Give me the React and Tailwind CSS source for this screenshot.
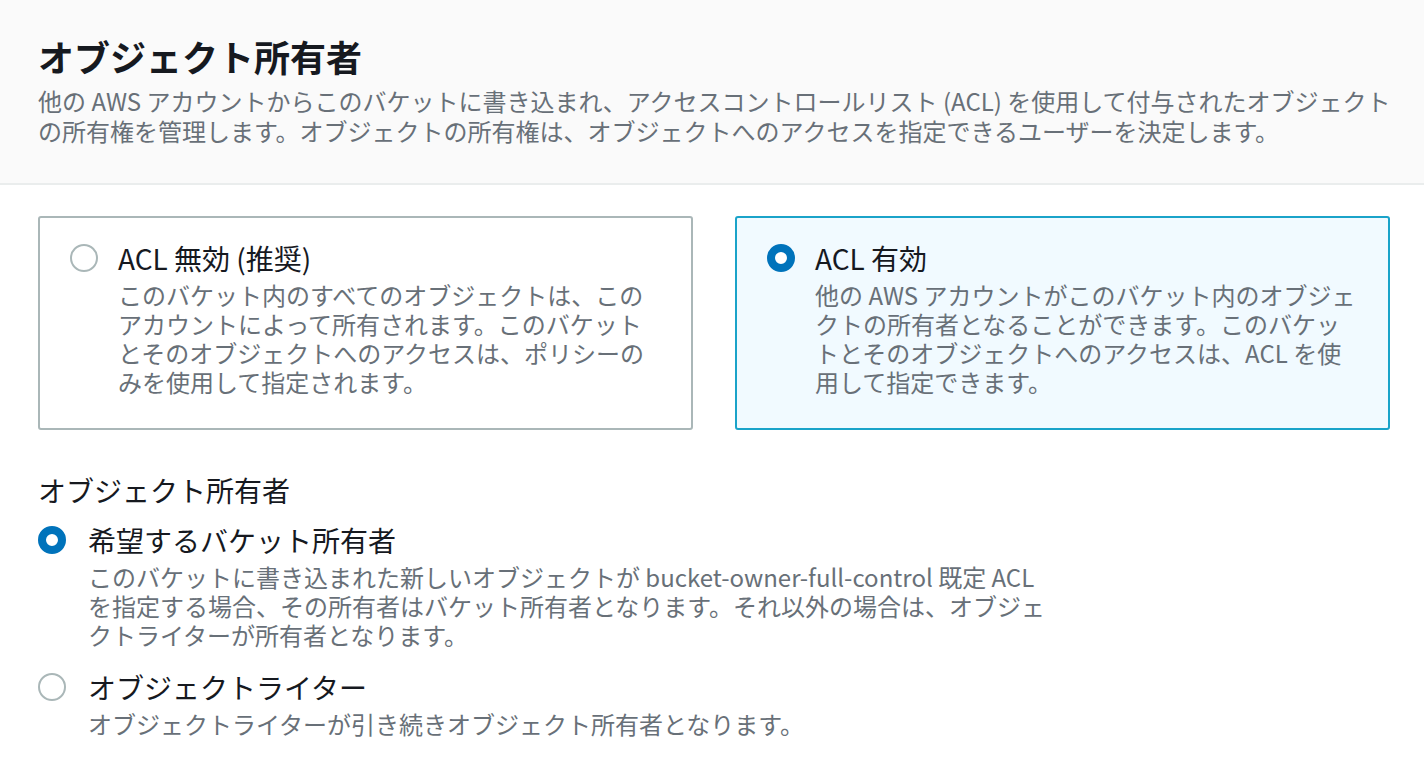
import React, { useState } from 'react';

const FONT = "font-['Noto_Sans_CJK_JP','Noto_Sans',sans-serif]";

// Radio circle used by both the card tiles and the plain list
const RadioDot = ({ checked }) =>
  checked ? (
    <span className="block w-7 h-7 shrink-0 rounded-full border-[8px] border-[#0073bb] bg-white" />
  ) : (
    <span className="block w-7 h-7 shrink-0 rounded-full border-2 border-[#aab7b8] bg-white" />
  );

const Lines = ({ lines }) => (
  <div className="text-[24px] leading-[29px] text-[#687078]">
    {lines.map((l, i) => (
      <div key={i} className="whitespace-nowrap">{l}</div>
    ))}
  </div>
);

const Tile = ({ title, lines, checked, onClick }) => (
  <div
    onClick={onClick}
    className={
      checked
        ? 'cursor-pointer rounded-[3px] border-2 border-[#1aa3c9] bg-[#f1faff] pl-[30px] pr-[30px] pt-[22px] pb-[32px]'
        : 'cursor-pointer rounded-[3px] border-2 border-[#aab7b8] bg-white pl-[30px] pr-[30px] pt-[22px] pb-[32px]'
    }
  >
    <div className="flex gap-5">
      <div className="h-9 flex items-center">
        <RadioDot checked={checked} />
      </div>
      <div className="flex flex-col gap-1">
        <div className="text-[28px] leading-9 text-[#16191f]">{title}</div>
        <Lines lines={lines} />
      </div>
    </div>
  </div>
);

const Option = ({ title, lines, checked, onClick }) => (
  <div onClick={onClick} className="flex gap-[22px] cursor-pointer">
    <div className="h-9 flex items-center">
      <RadioDot checked={checked} />
    </div>
    <div className="flex flex-col gap-1">
      <div className="text-[28px] leading-9 text-[#16191f]">{title}</div>
      <Lines lines={lines} />
    </div>
  </div>
);

export default function App() {
  const [acl, setAcl] = useState('enabled');
  const [owner, setOwner] = useState('bucket');

  return (
    <div className={`${FONT} min-h-screen bg-white`}>
      {/* Header */}
      <div className="bg-[#fafafa] border-b-2 border-[#eaeded] pl-[38px] pr-[35px] pt-[34px] pb-[37px]">
        <h2 className="text-[36px] leading-[44px] font-bold text-[#16191f]">オブジェクト所有者</h2>
        <div className="mt-2 text-[24px] leading-[30px] text-[#687078]">
          <div className="whitespace-nowrap">
            他の AWS アカウントからこのバケットに書き込まれ、アクセスコントロールリスト (ACL) を使用して付与されたオブジェクト
          </div>
          <div className="whitespace-nowrap">
            の所有権を管理します。オブジェクトの所有権は、オブジェクトへのアクセスを指定できるユーザーを決定します。
          </div>
        </div>
      </div>

      {/* ACL tiles */}
      <div className="pl-[38px] pr-[34px] pt-[31px]">
        <div className="grid grid-cols-2 gap-[42px]">
          <Tile
            title="ACL 無効 (推奨)"
            checked={acl === 'disabled'}
            onClick={() => setAcl('disabled')}
            lines={[
              'このバケット内のすべてのオブジェクトは、この',
              'アカウントによって所有されます。このバケット',
              'とそのオブジェクトへのアクセスは、ポリシーの',
              'みを使用して指定されます。',
            ]}
          />
          <Tile
            title="ACL 有効"
            checked={acl === 'enabled'}
            onClick={() => setAcl('enabled')}
            lines={[
              '他の AWS アカウントがこのバケット内のオブジェ',
              'クトの所有者となることができます。このバケッ',
              'トとそのオブジェクトへのアクセスは、ACL を使',
              '用して指定できます。',
            ]}
          />
        </div>

        {/* Object ownership radio group */}
        <div className="mt-[42px]">
          <div className="text-[28px] leading-9 text-[#16191f]">オブジェクト所有者</div>
          <div className="mt-[14px] flex flex-col gap-5">
            <Option
              title="希望するバケット所有者"
              checked={owner === 'bucket'}
              onClick={() => setOwner('bucket')}
              lines={[
                'このバケットに書き込まれた新しいオブジェクトが bucket-owner-full-control 既定 ACL',
                'を指定する場合、その所有者はバケット所有者となります。それ以外の場合は、オブジェ',
                'クトライターが所有者となります。',
              ]}
            />
            <Option
              title="オブジェクトライター"
              checked={owner === 'writer'}
              onClick={() => setOwner('writer')}
              lines={['オブジェクトライターが引き続きオブジェクト所有者となります。']}
            />
          </div>
        </div>
      </div>
    </div>
  );
}
